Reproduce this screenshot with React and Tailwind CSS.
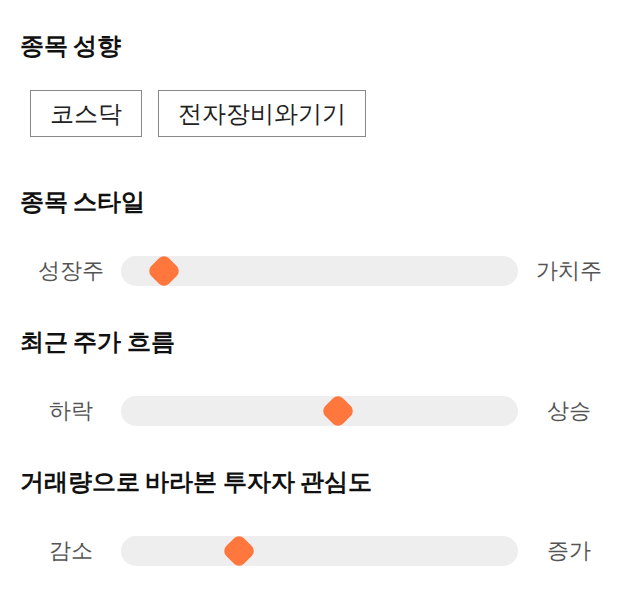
import React from 'react';

const sliders = [
  { title: '종목 스타일', left: '성장주', right: '가치주', value: 10.8 },
  { title: '최근 주가 흐름', left: '하락', right: '상승', value: 54.7 },
  { title: '거래량으로 바라본 투자자 관심도', left: '감소', right: '증가', value: 29.7 },
];

const tags = ['코스닥', '전자장비와기기'];

const SliderRow = ({ left, right, value }) => (
  <div className="flex items-center h-[30px]">
    <div className="w-[101px] text-center text-[22px] text-[#555] leading-none">{left}</div>
    <div className="relative flex-1 h-[30px] rounded-full bg-[#eeeeee]">
      <div
        className="absolute top-1/2 w-[25px] h-[25px] -translate-x-1/2 -translate-y-1/2 rotate-45 rounded-[7px] bg-[#ff773d]"
        style={{ left: `${value}%` }}
      />
    </div>
    <div className="w-[102px] text-center text-[22px] text-[#555] leading-none">{right}</div>
  </div>
);

export default function App() {
  return (
    <div className="w-[640px] h-[606px] bg-white px-5 pt-[30px] font-['DejaVu_Sans',sans-serif]">
      {/* 종목 성향 */}
      <h2 className="text-[24px] font-bold leading-8 text-[#111] [word-spacing:-3px]">종목 성향</h2>
      <div className="flex gap-4 mt-[28px] pl-[10px]">
        {tags.map(tag => (
          <div
            key={tag}
            className="h-[47px] flex items-center px-[19px] border border-[#888] text-[24px] text-[#222]"
          >
            {tag}
          </div>
        ))}
      </div>

      <div className="mt-[49px]">
        {sliders.map(s => (
          <div key={s.title} className="mb-[40px]">
            <h2 className="text-[24px] font-bold leading-8 text-[#111] mb-[38px] [word-spacing:-3px]">{s.title}</h2>
            <SliderRow left={s.left} right={s.right} value={s.value} />
          </div>
        ))}
      </div>
    </div>
  );
}
